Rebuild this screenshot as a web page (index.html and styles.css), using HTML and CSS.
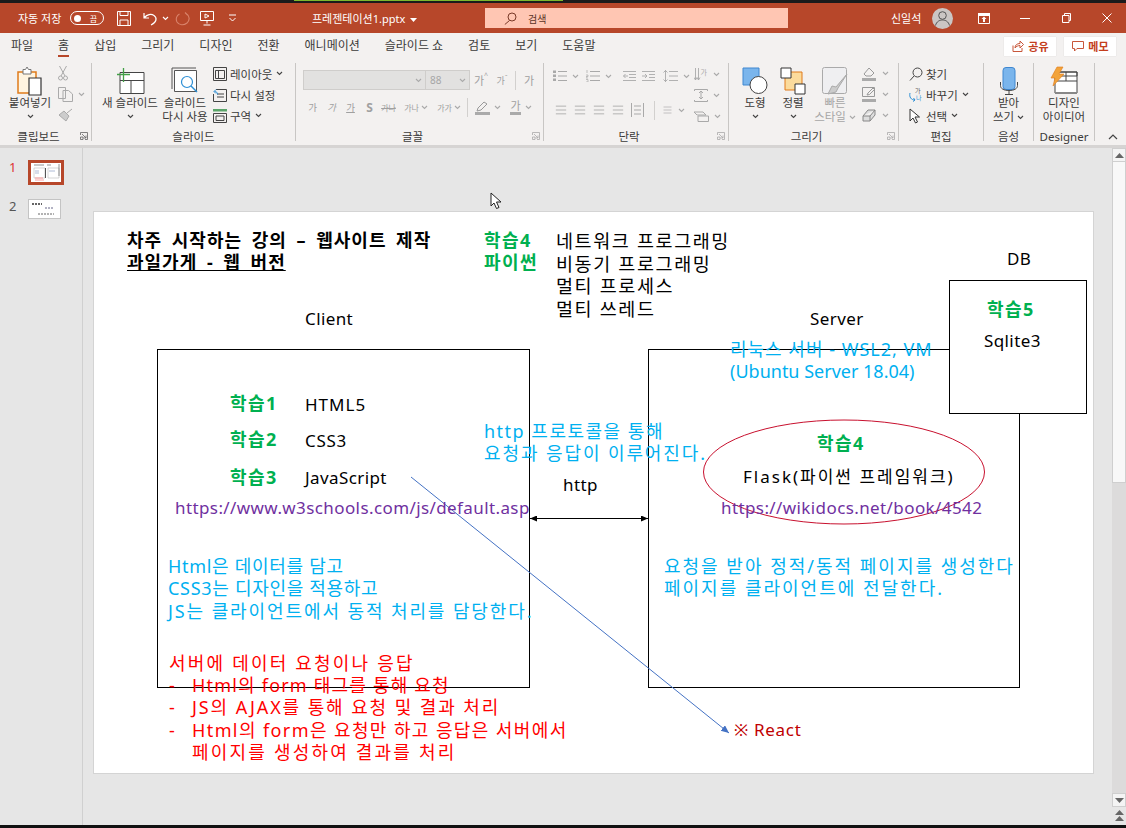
FILE: index.html
```html
<!DOCTYPE html>
<html lang="ko">

<head>
    <meta charset="UTF-8">
    <meta name="viewport" content="width=device-width, initial-scale=1.0">
    <title>프레젠테이션1.pptx</title>
    <link rel="stylesheet" href="styles.css">
</head>

<body>
    <!-- shared small glyphs -->
    <svg class="sprite">
        <defs>
            <symbol id="chev" viewBox="0 0 7 5"><path d="M1 1l2.5 2.5L6 1" fill="none" stroke="currentColor" stroke-width="1.1"/></symbol>
            <symbol id="lines" viewBox="0 0 14 12"><path d="M1 1.5h12M1 6h12M1 10.5h12" fill="none" stroke="currentColor"/></symbol>
            <symbol id="bullets" viewBox="0 0 14 12"><path d="M0 .5h3v2.500H0zM0 4.500h3v2.500H0zM0 8.500h3v2.500H0z" fill="currentColor"/><path d="M5 1.500h9M5 6h9M5 10.500h9" fill="none" stroke="currentColor"/></symbol>
            <symbol id="numbers" viewBox="0 0 14 12"><path d="M1 0v3M0 5h2v1.500H0v1.500h2M0 9.500h2v2.500H0" fill="none" stroke="currentColor" stroke-width=".7"/><path d="M4 1.500h10M4 6h10M4 10.500h10" fill="none" stroke="currentColor"/></symbol>
            <symbol id="outdent" viewBox="0 0 13 12"><path d="M0 1.500h13M6 4.500h7M6 7.500h7M0 10.500h13M5 6H.5M2.500 4L.5 6l2 2" fill="none" stroke="currentColor" stroke-width=".9"/></symbol>
            <symbol id="indent" viewBox="0 0 13 12"><path d="M0 1.500h13M7 4.500h6M7 7.500h6M0 10.500h13M0 6h5M3 4l2 2-2 2" fill="none" stroke="currentColor" stroke-width=".9"/></symbol>
            <symbol id="spacing" viewBox="0 0 15 12"><path d="M2.500 0v12M.5 2.500L2.500.5l2 2M.5 9.500l2 2 2-2M6 1.500h9M6 6h9M6 10.500h9" fill="none" stroke="currentColor" stroke-width=".9"/></symbol>
            <symbol id="launch" viewBox="0 0 8 8"><path d="M.5 3V.5h7v7H5M2 2l4 4M6 3.500V6H3.500M.5 5h2.500v2.500H.5z" fill="none" stroke="currentColor" stroke-width=".8"/></symbol>
        </defs>
    </svg>

    <div class="top-strip"><div class="top-green"></div></div>

    <!-- title bar -->
    <header class="titlebar">
        <span class="autosave">자동 저장</span>
        <span class="toggle"><i></i><b>끔</b></span>
        <svg class="qat qat-save" width="14" height="15" viewBox="0 0 14 15"><path d="M.5.500h13v14H.5zM3 .5v4h8v-4M3 14.500V9h8v5.500" fill="none" stroke="#fff"/></svg>
        <svg class="qat qat-undo" width="15" height="15" viewBox="0 0 15 15"><path d="M1 2v5h5M1.500 6.500C4 3.500 8 2.500 11 4.500c3.500 2.500 2.500 7-3 9.500" fill="none" stroke="#fff" stroke-width="1.200"/></svg>
        <svg class="qat-chev" width="7" height="5"><use href="#chev"/></svg>
        <svg class="qat qat-redo" width="15" height="15" viewBox="0 0 15 15"><path d="M10 1.500l2.500 2.500M4.500 3C1.500 4.500.5 8 2 11c2 3.500 7 3.500 10 1 2.500-2.500 2.500-6 .5-8.500" fill="none" stroke="#d9836b" stroke-width="1.100"/></svg>
        <svg class="qat qat-show" width="14" height="15" viewBox="0 0 14 15"><path d="M.5.500h13v9H.5zM7 9.500v3M3.500 14h7M5 3l4 2-4 2z" fill="none" stroke="#fff"/></svg>
        <svg class="qat-more" width="9" height="8" viewBox="0 0 9 8"><path d="M1 1h7M1.500 4l3 3 3-3" fill="none" stroke="#fff"/></svg>
        <span class="doc-title">프레젠테이션1.pptx<svg class="doc-caret" width="7" height="4"><path d="M0 0h7L3.500 4z" fill="#fff"/></svg></span>
        <div class="search">
            <svg width="13" height="13" viewBox="0 0 13 13"><path d="M5.500 8.500L.8 12.500" stroke="#7a3a28" fill="none"/><circle cx="8" cy="5" r="4" fill="none" stroke="#7a3a28"/></svg>
            <span>검색</span>
        </div>
        <span class="user">신일석</span>
        <span class="avatar"><svg width="21" height="21" viewBox="0 0 21 21"><circle cx="10.500" cy="7.500" r="3.800" fill="none" stroke="#555"/><path d="M3.500 17.500c1-4 4-5.500 7-5.500s6 1.500 7 5.500" fill="none" stroke="#555"/></svg></span>
        <svg class="win win-display" width="12" height="11" viewBox="0 0 12 11"><path d="M.5.500h11v10H.5z" fill="none" stroke="#fff"/><path d="M0 0h12v3H0zM6 3.500L3.500 6h1.500v3h2V6h1.500z" fill="#fff"/></svg>
        <svg class="win win-min" width="10" height="10" viewBox="0 0 10 10"><path d="M0 5.500h10" stroke="#fff"/></svg>
        <svg class="win win-max" width="9" height="10" viewBox="0 0 9 10"><path d="M.5 2.500h6.500v7H.5zM2.500 2.500v-2h6v7H7" fill="none" stroke="#fff"/></svg>
        <svg class="win win-close" width="10" height="10" viewBox="0 0 10 10"><path d="M.5.500l9 9M9.500.500l-9 9" stroke="#fff"/></svg>
    </header>

    <!-- tabs -->
    <nav class="tabs">
        <span class="tab">파일</span>
        <span class="tab tab-active">홈</span>
        <span class="tab">삽입</span>
        <span class="tab">그리기</span>
        <span class="tab">디자인</span>
        <span class="tab">전환</span>
        <span class="tab">애니메이션</span>
        <span class="tab">슬라이드 쇼</span>
        <span class="tab">검토</span>
        <span class="tab">보기</span>
        <span class="tab">도움말</span>
        <span class="tab-btn tab-btn-first">
            <svg width="12" height="12" viewBox="0 0 12 12"><path d="M1 5.500v6h9V8M3 8c0-3 2-4.500 5-4.500V1l3.500 3.500L8 8V5.500C6 5.500 4 6.500 3 8z" fill="none" stroke="#c8573a"/></svg>공유
        </span>
        <span class="tab-btn">
            <svg width="12" height="12" viewBox="0 0 12 12"><path d="M.5 1.500h11v7H5L2.500 11V8.500h-2z" fill="none" stroke="#c8573a"/></svg>메모
        </span>
    </nav>

    <!-- ribbon -->
    <section class="ribbon">
        <div class="group g-clip">
            <div class="group-body">
                <div class="big big-paste">
                    <svg class="big-icon" width="26" height="30" viewBox="0 0 26 30">
                        <path d="M1 6h18v21H1z" fill="#fff4e0" stroke="#e07b1a" stroke-width="1.500"/>
                        <path d="M6 6V3.500h2.500L10 1l1.500 2.500H14V6v2H6z" fill="#fff" stroke="#777"/>
                        <path d="M12 12h12v17H12z" fill="#fff" stroke="#333" stroke-width="1.200"/>
                    </svg>
                    <span>붙여넣기</span>
                    <svg class="chev" width="7" height="5"><use href="#chev"/></svg>
                </div>
                <div class="clip-tools">
                    <svg width="10" height="16" viewBox="0 0 10 16"><path d="M1.500 1L7 11M8.500 1L3 11" fill="none" stroke="#aaa"/><circle cx="2.500" cy="13" r="2" fill="none" stroke="#aaa"/><circle cx="7.500" cy="13" r="2" fill="none" stroke="#aaa"/></svg>
                    <span class="clip-copy">
                        <svg width="15" height="15" viewBox="0 0 15 15"><path d="M.5.500h7v11h-7zM5 3.500h5.500l4 3.500v7.500H5z" fill="#f3f1f0" stroke="#aaa"/></svg>
                        <svg class="chev-off" width="7" height="5"><use href="#chev"/></svg>
                    </span>
                    <svg width="15" height="14" viewBox="0 0 15 14"><path d="M9 5l5-4M6 3l5 5-3 5-7-6z" fill="#ccc" stroke="#aaa"/></svg>
                </div>
            </div>
            <div class="group-label with-launch">클립보드<svg class="launch" width="8" height="8"><use href="#launch"/></svg></div>
        </div>

        <div class="group g-slide">
            <div class="group-body">
                <div class="big big-new">
                    <svg class="big-icon" width="29" height="28" viewBox="0 0 29 28">
                        <path d="M4 5.500h24v21H4zM4 13.500h24M15 13.500v13" fill="#fff" stroke="#444"/>
                        <path d="M1 7.500h13M7.500 1v14" stroke="#43a047" stroke-width="1.300"/>
                    </svg>
                    <span>새 슬라이드</span>
                    <svg class="chev" width="7" height="5"><use href="#chev"/></svg>
                </div>
                <div class="big big-reuse">
                    <svg class="big-icon" width="29" height="28" viewBox="0 0 29 28">
                        <path d="M1 1h24M1 1v21" stroke="#555" fill="none"/>
                        <path d="M3.500 3.500h22v21h-22z" fill="#fff" stroke="#555"/>
                        <circle cx="16" cy="15" r="5.500" fill="#fff" stroke="#2d8fd5" stroke-width="1.200"/>
                        <path d="M20 19l6 6" stroke="#2d8fd5" stroke-width="1.400"/>
                    </svg>
                    <span>슬라이드<br>다시 사용</span>
                </div>
                <div class="rows rows-slide">
                    <div class="row"><svg width="14" height="14" viewBox="0 0 14 14"><path d="M.5.500h13v13H.5zM2.500 3.500h9M5.500 3.500v8M2.500 3.500v8h9v-8" fill="none" stroke="#444"/></svg>레이아웃<svg class="chev" width="7" height="5"><use href="#chev"/></svg></div>
                    <div class="row"><svg width="14" height="14" viewBox="0 0 14 14"><path d="M3 1.500h10.500v12H.5V6M4 6h7M4 9h7" fill="none" stroke="#444"/><path d="M1 3.500l2-2M1 3.500l2 2M1.500 3.500c2 0 3 1 3 3" fill="none" stroke="#2d8fd5"/></svg>다시 설정</div>
                    <div class="row"><svg width="14" height="14" viewBox="0 0 14 14"><path d="M0 0h14v2.500H0z" fill="#5aa469"/><path d="M.5 4.500h13v9H.5zM3 7h8v4.500H3z" fill="none" stroke="#444"/></svg>구역<svg class="chev" width="7" height="5"><use href="#chev"/></svg></div>
                </div>
            </div>
            <div class="group-label">슬라이드</div>
        </div>

        <div class="group g-font">
            <div class="group-body font-body">
                <div class="font-top">
                    <span class="combo combo-name"><svg class="chev-off" width="7" height="5"><use href="#chev"/></svg></span>
                    <span class="combo combo-size">88<svg class="chev-off" width="7" height="5"><use href="#chev"/></svg></span>
                    <span class="fi fi-grow">가<sup>^</sup></span>
                    <span class="fi fi-shrink">가<sup>ˇ</sup></span>
                    <i class="vsep"></i>
                    <span class="fi fi-clear">가</span>
                </div>
                <div class="font-bottom">
                    <span class="fi fi-small b">가</span>
                    <span class="fi fi-small it">가</span>
                    <span class="fi fi-small un">가</span>
                    <span class="fi fi-s">S</span>
                    <span class="fi fi-tiny st">가나</span>
                    <span class="fi fi-tiny spaced">가나<svg class="chev-off" width="7" height="5"><use href="#chev"/></svg></span>
                    <span class="fi fi-tiny case">가가<svg class="chev-off" width="7" height="5"><use href="#chev"/></svg></span>
                    <i class="vsep"></i>
                    <span class="fi fi-pen">
                        <svg width="15" height="15" viewBox="0 0 15 15"><path d="M2 11l1-3 6-6 3 2-6 6z" fill="none" stroke="#999"/><path d="M0 12h15v3H0z" fill="#aaa"/></svg>
                        <svg class="chev-off" width="7" height="5"><use href="#chev"/></svg>
                    </span>
                    <span class="fi fi-color"><span class="under">가</span><svg class="chev-off" width="7" height="5"><use href="#chev"/></svg></span>
                </div>
            </div>
            <div class="group-label with-launch">글꼴<svg class="launch launch-off" width="8" height="8"><use href="#launch"/></svg></div>
        </div>

        <div class="group g-para">
            <div class="group-body para-body">
                <div class="para-left">
                    <div class="para-row para-top">
                        <span class="pi pi-a"><svg width="14" height="12"><use href="#bullets"/></svg><svg class="chev-off" width="7" height="5"><use href="#chev"/></svg></span>
                        <span class="pi pi-b"><svg width="14" height="12"><use href="#numbers"/></svg><svg class="chev-off" width="7" height="5"><use href="#chev"/></svg></span>
                        <span class="pi pi-c"><svg width="13" height="12"><use href="#outdent"/></svg></span>
                        <span class="pi pi-d"><svg width="13" height="12"><use href="#indent"/></svg></span>
                        <span class="pi pi-e"><svg width="15" height="12"><use href="#spacing"/></svg><svg class="chev-off" width="7" height="5"><use href="#chev"/></svg></span>
                    </div>
                    <div class="para-row para-bottom">
                        <svg width="12" height="12"><use href="#lines"/></svg>
                        <svg width="12" height="12"><use href="#lines"/></svg>
                        <svg width="12" height="12"><use href="#lines"/></svg>
                        <svg width="12" height="12"><use href="#lines"/></svg>
                        <svg width="13" height="14" viewBox="0 0 13 14"><path d="M.5 0v14M12.500 0v14M3 3h7M3 7h7M3 11h7" fill="none" stroke="currentColor"/></svg>
                        <i class="vsep"></i>
                        <span class="pi pi-f"><svg width="11" height="8"><use href="#lines"/></svg><svg class="chev-off" width="7" height="5"><use href="#chev"/></svg></span>
                    </div>
                </div>
                <div class="para-right">
                    <span class="pr"><svg width="14" height="15" viewBox="0 0 14 15"><path d="M1.500 1v12M4.500 1v12M0 10.500l1.500 2.500 1.500-2.500M3 10.500L4.500 13 6 10.500" fill="none" stroke="currentColor" stroke-width=".9"/><text x="6.500" y="8" font-size="7" fill="currentColor">가</text></svg><svg class="chev-off" width="7" height="5"><use href="#chev"/></svg></span>
                    <span class="pr"><svg width="14" height="13" viewBox="0 0 14 13"><path d="M.5 2V.5h13V2M.5 11v1.500h13V11M7 2v8M5 4l2-2 2 2M5 8l2 2 2-2" fill="none" stroke="currentColor"/></svg><svg class="chev-off" width="7" height="5"><use href="#chev"/></svg></span>
                    <span class="pr"><svg width="15" height="11" viewBox="0 0 15 11"><path d="M0 1h9l3 3H3zM4 5h10.500v5.500H4z" fill="none" stroke="currentColor"/></svg><svg class="chev-off" width="7" height="5"><use href="#chev"/></svg></span>
                </div>
            </div>
            <div class="group-label with-launch">단락<svg class="launch launch-off" width="8" height="8"><use href="#launch"/></svg></div>
        </div>

        <div class="group g-draw">
            <div class="group-body">
                <div class="big big-shape">
                    <svg class="big-icon" width="26" height="28" viewBox="0 0 26 28">
                        <path d="M1 1h16v17H1z" fill="#7ab5ec" stroke="#3f87d0"/>
                        <circle cx="16.500" cy="18" r="8.500" fill="#fff" stroke="#444"/>
                    </svg>
                    <span>도형</span>
                    <svg class="chev" width="7" height="5"><use href="#chev"/></svg>
                </div>
                <div class="big big-arrange">
                    <svg class="big-icon" width="26" height="28" viewBox="0 0 26 28">
                        <path d="M5 5h17v18H5z" fill="#fbdb9c" stroke="#e07b1a"/>
                        <path d="M1 1h10v10H1zM15 17h10v10H15z" fill="#fff" stroke="#333"/>
                    </svg>
                    <span>정렬</span>
                    <svg class="chev" width="7" height="5"><use href="#chev"/></svg>
                </div>
                <div class="big big-quick">
                    <svg class="big-icon" width="26" height="28" viewBox="0 0 26 28">
                        <rect x=".5" y=".5" width="24" height="26" rx="2" fill="#efeff1" stroke="#aaa"/>
                        <path d="M25 7L14 20l-4-1-4 8 8-2 2-4z" fill="#ccc" stroke="#aaa"/>
                    </svg>
                    <span>빠른<br>스타일<svg class="chev-off chev-inline" width="7" height="5"><use href="#chev"/></svg></span>
                </div>
                <div class="rows rows-draw">
                    <div class="row"><svg width="14" height="15" viewBox="0 0 14 15"><path d="M2 8l5-6 5 5-3 3H4z" fill="none" stroke="#999"/><path d="M0 12h14v3H0z" fill="#aaa"/></svg><svg class="chev-off" width="7" height="5"><use href="#chev"/></svg></div>
                    <div class="row"><svg width="14" height="15" viewBox="0 0 14 15"><path d="M.5.500h12v9H.5zM5 8l1-2 5-5 1.500 1.500-5 5z" fill="none" stroke="#999"/><path d="M0 12h14v3H0z" fill="#aaa"/></svg><svg class="chev-off" width="7" height="5"><use href="#chev"/></svg></div>
                    <div class="row"><svg width="14" height="13" viewBox="0 0 14 13"><path d="M1 7l5-6h7v5l-5 6H1zM1 7h7l5-6M8 7v5" fill="#ddd" stroke="#888"/></svg><svg class="chev-off" width="7" height="5"><use href="#chev"/></svg></div>
                </div>
            </div>
            <div class="group-label with-launch">그리기<svg class="launch launch-off" width="8" height="8"><use href="#launch"/></svg></div>
        </div>

        <div class="group g-edit">
            <div class="group-body">
                <div class="rows rows-edit">
                    <div class="row"><svg width="14" height="14" viewBox="0 0 14 14"><circle cx="8.500" cy="5.500" r="4.500" fill="none" stroke="#444"/><path d="M5 9l-4 4.500" stroke="#444"/></svg>찾기</div>
                    <div class="row"><svg width="14" height="15" viewBox="0 0 14 15"><path d="M1 6c-1 4 1 7 5 7M4.500 11L6 13l-2 1.500" fill="none" stroke="#2d8fd5"/><text x="6" y="6" font-size="6" fill="#555">가</text><text x="7" y="13" font-size="6" fill="#2d8fd5">나</text></svg>바꾸기<svg class="chev chev-far" width="7" height="5"><use href="#chev"/></svg></div>
                    <div class="row"><svg width="14" height="16" viewBox="0 0 14 16"><path d="M1 1v12l3-3 2.500 5 2-1-2.500-5h4.500z" fill="#fff" stroke="#333"/></svg>선택<svg class="chev" width="7" height="5"><use href="#chev"/></svg></div>
                </div>
            </div>
            <div class="group-label">편집</div>
        </div>

        <div class="group g-voice">
            <div class="group-body">
                <div class="big big-voice">
                    <svg class="big-icon" width="18" height="28" viewBox="0 0 18 28">
                        <rect x="3" y=".5" width="12" height="22" rx="3" fill="#7ab5ec" stroke="#3f87d0"/>
                        <path d="M.5 15v3.500c0 3 3 5 8.500 5s8.500-2 8.500-5V15M9 23.500V27M5 27.500h8" fill="none" stroke="#444"/>
                    </svg>
                    <span>받아<br>쓰기<svg class="chev chev-inline" width="7" height="5"><use href="#chev"/></svg></span>
                </div>
            </div>
            <div class="group-label">음성</div>
        </div>

        <div class="group g-design">
            <div class="group-body">
                <div class="big big-design">
                    <svg class="big-icon" width="28" height="28" viewBox="0 0 28 28">
                        <path d="M5 5h22v21H5z" fill="#fff" stroke="#444"/>
                        <path d="M5 5h22v4H5zM5 14h22M16 5v9" fill="none" stroke="#444"/>
                        <path d="M5 26h22" stroke="#888" stroke-width="2"/>
                        <path d="M7 0h6l-4 7h5L3 19l2-8H1z" fill="#f2a33a" stroke="#e07b1a" stroke-width=".6"/>
                    </svg>
                    <span>디자인<br>아이디어</span>
                </div>
            </div>
            <div class="group-label">Designer</div>
        </div>

        <svg class="collapse" width="10" height="6" viewBox="0 0 10 6"><path d="M1 5l4-4 4 4" fill="none" stroke="#444" stroke-width="1.200"/></svg>
    </section>
    <div class="ribbon-shadow"></div>

    <main class="workspace">
        <aside class="thumbs">
            <div class="thumb-row">
                <span class="thumb-no thumb-no-on">1</span>
                <div class="thumb thumb-on">
                    <svg width="30" height="19" viewBox="0 0 30 19">
                        <path d="M3 5h11v10H3zM17 5h11v10H17z" fill="none" stroke="#bbb" stroke-width=".6"/>
                        <path d="M3 2h10M16 2h4M28 1v12" stroke="#777" stroke-width=".8"/>
                        <path d="M4 8h4M4 10h4M18 8h6" stroke="#9ac" stroke-width=".8"/>
                        <path d="M4 15h8M4 17h9" stroke="#f88" stroke-width=".8"/>
                        <path d="M14.500 5v10" stroke="#555" stroke-width="1"/>
                    </svg>
                </div>
            </div>
            <div class="thumb-row thumb-row-2">
                <span class="thumb-no">2</span>
                <div class="thumb">
                    <svg width="31" height="18" viewBox="0 0 31 18">
                        <path d="M3 4h10" stroke="#333" stroke-width="1.400" stroke-dasharray="2 1"/>
                        <path d="M16 8h9" stroke="#668" stroke-width="1" stroke-dasharray="2 1"/>
                        <path d="M9 14h16" stroke="#666" stroke-width="1" stroke-dasharray="2 1"/>
                    </svg>
                </div>
            </div>
        </aside>

        <div class="canvas">
            <svg class="cursor" width="13" height="18" viewBox="0 0 13 18"><path d="M1 1v13l3-3 2.500 5.500 2.500-1L6.500 10H11z" fill="#fff" stroke="#222"/></svg>

            <!-- the slide is a free canvas, its shapes sit where the author dropped them -->
            <div class="slide">
                <div class="box box-client"></div>
                <div class="box box-server"></div>
                <div class="box box-db"></div>

                <svg class="overlay" width="999" height="561" viewBox="0 0 999 561">
                    <defs>
                        <marker id="tip" markerWidth="8" markerHeight="8" refX="7" refY="3" orient="auto"><path d="M0 0l7 3-7 3z" fill="#000"/></marker>
                        <marker id="tipback" markerWidth="8" markerHeight="8" refX="0" refY="3" orient="auto"><path d="M7 0L0 3l7 3z" fill="#000"/></marker>
                        <marker id="tipblue" markerWidth="9" markerHeight="8" refX="8" refY="3.500" orient="auto"><path d="M0 0l8 3.500-8 3.500z" fill="#4472c4"/></marker>
                    </defs>
                    <ellipse cx="750" cy="260" rx="140.500" ry="52" fill="none" stroke="#c8102e"/>
                    <path d="M436 306.500h118" stroke="#000" marker-start="url(#tipback)" marker-end="url(#tip)"/>
                    <path d="M317 265L635 521" stroke="#4472c4" marker-end="url(#tipblue)"/>
                </svg>

                <div class="txt heading t-title">차주 시작하는 강의 – 웹사이트 제작<br><u>과일가게 - 웹 버전</u></div>
                <div class="txt green t-python">학습4<br>파이썬</div>
                <div class="txt black-lg t-topics"><span class="ln">네트워크 프로그래밍</span><span class="ln">비동기 프로그래밍</span><span class="ln">멀티 프로세스</span><span class="ln">멀티 쓰레드</span></div>

                <div class="txt label t-client">Client</div>
                <div class="txt label t-server">Server</div>
                <div class="txt label t-db">DB</div>

                <div class="txt green t-l1">학습1</div>
                <div class="txt label t-html">HTML5</div>
                <div class="txt green t-l2">학습2</div>
                <div class="txt label t-css">CSS3</div>
                <div class="txt green t-l3">학습3</div>
                <div class="txt label t-js">JavaScript</div>
                <div class="txt purple t-w3">https://www.w3schools.com/js/default.asp</div>

                <div class="txt blue t-proto"><span class="ln ls15">http 프로토콜을 통해</span><span class="ln ls19">요청과 응답이 이루어진다.</span></div>
                <div class="txt label t-http">http</div>

                <div class="txt blue t-linux"><span class="ln ls1">리눅스 서버 - WSL2, VM</span><span class="ln ls0">(Ubuntu Server 18.04)</span></div>
                <div class="txt green t-l5">학습5</div>
                <div class="txt label t-sqlite">Sqlite3</div>

                <div class="txt green t-l4">학습4</div>
                <div class="txt label t-flask">Flask(파이썬 프레임워크)</div>
                <div class="txt purple t-wiki">https://wikidocs.net/book/4542</div>

                <div class="txt blue t-client-note"><span class="ln ls07">Html은 데이터를 담고</span><span class="ln ls07">CSS3는 디자인을 적용하고</span><span class="ln ls19">JS는 클라이언트에서 동적 처리를 담당한다.</span></div>
                <div class="txt blue t-server-note"><span class="ln ls2">요청을 받아 정적/동적 페이지를 생성한다</span><span class="ln ls2">페이지를 클라이언트에 전달한다.</span></div>

                <div class="txt red t-req ls22">서버에 데이터 요청이나 응답</div>
                <ul class="txt red t-list">
                    <li><span class="ln ls12">Html의 form 태그를 통해 요청</span></li>
                    <li><span class="ln ls19">JS의 AJAX를 통해 요청 및 결과 처리</span></li>
                    <li><span class="ln ls14">Html의 form은 요청만 하고 응답은 서버에서</span><span class="ln ls22">페이지를 생성하여 결과를 처리</span></li>
                </ul>
                <div class="txt t-react">※ React</div>
            </div>
        </div>

        <div class="scrollbar">
            <span class="sb-btn"><svg width="9" height="5"><path d="M4.500 0L9 5H0z" fill="#666"/></svg></span>
            <span class="sb-thumb"></span>
            <span class="sb-track"></span>
            <span class="sb-btn"><svg width="9" height="5"><path d="M4.500 5L9 0H0z" fill="#666"/></svg></span>
            <span class="sb-page">
                <svg width="9" height="12" viewBox="0 0 9 12"><path d="M4.500 0L9 5H0zM4.500 6L9 11H0z" fill="#666"/></svg>
            </span>
        </div>
    </main>

    <div class="bottom-strip"></div>
</body>

</html>
```

FILE: styles.css
```css
* {
    box-sizing: border-box;
}

body {
    font-family: "Noto Sans", "Noto Sans CJK KR", sans-serif;
    margin: 0;
    padding: 0;
    width: 1126px;
    height: 828px;
    overflow: hidden;
    display: flex;
    flex-direction: column;
    background-color: #e6e6e6;
    color: #3b3a39;
}

.sprite {
    display: none;
}

.top-strip {
    height: 3px;
    background-color: #1b1b1b;
}

.top-green {
    width: 269px;
    height: 1px;
    margin-left: 294px;
    background-color: #7fb82e;
}

.bottom-strip {
    height: 3px;
    background-color: #111;
}

/* title bar */
.titlebar {
    height: 30px;
    display: flex;
    align-items: center;
    background-color: #b7472a;
    color: #fff;
    font-size: 11px;
}

.autosave {
    margin-left: 18px;
    width: 47px;
    white-space: nowrap;
}

.toggle {
    width: 34px;
    height: 14px;
    margin-left: 5px;
    border: 1px solid #fff;
    border-radius: 7px;
    display: flex;
    align-items: center;
    justify-content: space-between;
    padding: 0 6px 0 3px;
}

.toggle i {
    width: 7px;
    height: 7px;
    border-radius: 50%;
    background-color: #fff;
}

.toggle b {
    font-weight: 400;
    font-size: 8px;
}

.qat-save { margin-left: 13px; }
.qat-undo { margin-left: 12px; }
.qat-chev { margin-left: 4px; color: #fff; }
.qat-redo { margin-left: 6px; }
.qat-show { margin-left: 10px; }
.qat-more { margin-left: 14px; }

.doc-title {
    margin-left: 75px;
    width: 173px;
    white-space: nowrap;
    font-size: 11px;
}

.doc-caret {
    margin-left: 5px;
    vertical-align: 1px;
}

.search {
    width: 303px;
    height: 20px;
    display: flex;
    align-items: center;
    padding-left: 19px;
    gap: 11px;
    background-color: #ffc6b3;
    color: #5a3326;
    font-size: 10px;
}

.user {
    margin-left: 103px;
    width: 41px;
}

.avatar {
    width: 21px;
    height: 21px;
    border-radius: 50%;
    background-color: #cbc6c4;
    display: flex;
}

.win-display { margin-left: 25px; }
.win-min { margin-left: 30px; }
.win-max { margin-left: 32px; }
.win-close { margin-left: 31px; }

/* tabs */
.tabs {
    height: 26px;
    display: flex;
    align-items: center;
    gap: 25px;
    padding-left: 11px;
    background-color: #f3f1f0;
    font-size: 12px;
    position: relative;
}

.tab {
    white-space: nowrap;
    line-height: 26px;
    height: 26px;
    position: relative;
}

.tab-active::after {
    content: "";
    position: absolute;
    left: 0;
    right: 0;
    bottom: 2px;
    height: 2px;
    background-color: #b7472a;
}

.tab-btn {
    width: 52px;
    height: 19px;
    margin-left: -17px;
    display: flex;
    align-items: center;
    justify-content: center;
    gap: 4px;
    background-color: #fff;
    color: #c43e1c;
    font-weight: 700;
    font-size: 11px;
    box-shadow: 0 0 1px #ccc;
}

.tab-btn-first {
    margin-left: 384px;
}

/* ribbon */
.ribbon {
    height: 86px;
    display: flex;
    position: relative;
    background-color: #f3f1f0;
    font-size: 11.500px;
}

.ribbon-shadow {
    height: 3px;
    background-color: #d6d4d3;
}

.group {
    height: 78px;
    margin-top: 4px;
    border-right: 1px solid #c8c6c4;
    display: flex;
    flex-direction: column;
    position: relative;
}

.g-clip { width: 92px; }
.g-slide { width: 204px; }
.g-font { width: 248px; }
.g-para { width: 185px; }
.g-draw { width: 170px; }
.g-edit { width: 85px; }
.g-voice { width: 50px; }
.g-design { width: 61px; }

.group-body {
    height: 69px;
    flex: none;
    display: flex;
}

.group-label {
    text-align: center;
    line-height: 9px;
    font-size: 11.500px;
    white-space: nowrap;
}

.with-launch {
    padding-right: 14px;
}

.launch {
    position: absolute;
    right: 3px;
    bottom: 1px;
    color: #666;
}

.launch-off {
    color: #aaa;
}

.big {
    display: flex;
    flex-direction: column;
    align-items: center;
    padding-top: 3px;
    line-height: 14px;
    text-align: center;
    white-space: nowrap;
}

.big-icon {
    height: 30px;
}

.chev {
    color: #444;
}

.chev-off {
    color: #aaa;
}

.big > .chev {
    margin-top: 4px;
}

.chev-inline {
    margin-left: 3px;
    vertical-align: 1px;
}

.big-paste {
    width: 52px;
    margin-left: 4px;
}

.clip-tools {
    margin-left: 2px;
    padding-top: 2px;
    display: flex;
    flex-direction: column;
    gap: 6px;
}

.clip-copy {
    display: flex;
    align-items: center;
    gap: 5px;
}

.big-new {
    width: 66px;
    margin-left: 5px;
}

.big-reuse {
    width: 44px;
}

.rows {
    display: flex;
    flex-direction: column;
}

.row {
    height: 21px;
    display: flex;
    align-items: center;
    gap: 3px;
    white-space: nowrap;
}

.row > .chev,
.row > .chev-off {
    margin-left: 1px;
}

.rows-slide {
    margin-left: 6px;
}

/* font group */
.font-body {
    flex-direction: column;
    padding-left: 7px;
    color: #a6a6a6;
}

.font-top {
    height: 20px;
    margin-top: 7px;
    display: flex;
    align-items: center;
}

.combo {
    height: 20px;
    display: flex;
    align-items: center;
    justify-content: flex-end;
    gap: 5px;
    padding: 0 3px;
    background-color: #e2e1e0;
    border: 1px solid #cfcdcb;
    font-size: 10px;
}

.combo-name { width: 123px; }
.combo-size { width: 44px; justify-content: space-between; border-left: 0; padding-left: 4px; }

.fi {
    display: flex;
    align-items: center;
    justify-content: center;
    white-space: nowrap;
    color: #a0a0a0;
}

.fi sup {
    font-size: 7px;
    line-height: 1;
    align-self: flex-start;
}

.fi-grow { width: 18px; margin-left: 2px; font-size: 11px; }
.fi-shrink { width: 20px; font-size: 9px; margin-left: 2px; }
.fi-clear { width: 16px; margin-left: 5px; font-size: 11px; }

.vsep {
    width: 1px;
    height: 19px;
    margin-left: 3px;
    background-color: #d2d0ce;
}

.font-bottom {
    height: 20px;
    margin-top: 7px;
    display: flex;
    align-items: center;
}

.fi-small { width: 19px; font-size: 9.500px; }
.it { font-style: italic; }
.un { text-decoration: underline; }
.fi-s { width: 19px; font-size: 12px; font-weight: 700; }
.fi-tiny { font-size: 8px; gap: 2px; }
.st { width: 19px; text-decoration: line-through; }
.spaced { width: 32px; margin-left: 2px; }
.case { width: 30px; margin-left: 2px; }
.fi-pen { margin-left: 5px; width: 30px; gap: 4px; }
.fi-color { margin-left: 3px; width: 30px; gap: 4px; font-size: 11px; }
.under { border-bottom: 3px solid #aaa; line-height: 12px; }

/* paragraph group */
.para-body {
    color: #a9a9a9;
}

.para-left {
    width: 150px;
    padding-left: 9px;
}

.para-row {
    display: flex;
    align-items: center;
}

.para-top {
    height: 20px;
    margin-top: 3px;
}

.para-bottom {
    height: 20px;
    margin-top: 14px;
    gap: 7px;
    padding-left: 2px;
}

.pi {
    display: flex;
    align-items: center;
    gap: 5px;
}

.pi-b { margin-left: 7px; }
.pi-c { margin-left: 11px; }
.pi-d { margin-left: 6px; }
.pi-e { margin-left: 8px; }

.para-right {
    padding-top: 1px;
    display: flex;
    flex-direction: column;
}

.pr {
    height: 21px;
    display: flex;
    align-items: center;
    gap: 5px;
    font-size: 9px;
}

/* drawing group */
.big-shape {
    width: 34px;
    margin-left: 9px;
}

.big-arrange {
    width: 34px;
    margin-left: 4px;
}

.big-quick {
    width: 50px;
    margin-left: 0;
    color: #a6a6a6;
}

.rows-draw {
    margin-left: 2px;
}

.rows-draw .row {
    gap: 5px;
}

.rows-edit {
    margin-left: 10px;
}

.chev-far {
    margin-left: 10px;
}

.big-voice {
    width: 49px;
}

.big-design {
    width: 60px;
}

.collapse {
    position: absolute;
    left: 1108px;
    bottom: 5px;
}

/* workspace */
.workspace {
    flex: 1;
    min-height: 0;
    display: flex;
}

.thumbs {
    width: 83px;
    border-right: 1px solid #d0d0d0;
    padding-top: 12px;
}

.thumb-row {
    display: flex;
    padding-left: 9px;
}

.thumb-row-2 {
    margin-top: 14px;
}

.thumb-no {
    width: 19px;
    font-size: 13px;
    line-height: 14px;
    color: #555;
}

.thumb-no-on {
    color: #d33;
}

.thumb {
    width: 33px;
    height: 20px;
    background-color: #fff;
    border: 1px solid #c4c4c4;
    display: flex;
}

.thumb-on {
    width: 36px;
    height: 25px;
    border: 3px solid #b7472a;
}

.canvas {
    flex: 1;
    position: relative;
}

.cursor {
    position: absolute;
    left: 407px;
    top: 44px;
}

.slide {
    width: 999px;
    height: 561px;
    margin: 64px 0 0 11px;
    position: relative;
    background-color: #fff;
    box-shadow: 0 0 0 1px #d4d4d4;
}

.box {
    position: absolute;
    border: 1px solid #000;
    background-color: #fff;
}

.box-client { left: 63px; top: 137px; width: 373px; height: 339px; }
.box-server { left: 554px; top: 137px; width: 372px; height: 339px; }
.box-db { left: 855px; top: 68px; width: 138px; height: 134px; }

.overlay {
    position: absolute;
    left: 0;
    top: 0;
}

.txt {
    position: absolute;
    margin: 0;
    white-space: nowrap;
    font-size: 18px;
    line-height: 22.400px;
    color: #000;
}

.ln { display: block; }
.ls0 { letter-spacing: 0; }
.ls07 { letter-spacing: .7px; }
.ls1 { letter-spacing: 1px; }
.ls12 { letter-spacing: 1.200px; }
.ls14 { letter-spacing: 1.400px; }
.ls15 { letter-spacing: 1.500px; }
.ls19 { letter-spacing: 1.900px; }
.ls2 { letter-spacing: 2px; }
.ls22 { letter-spacing: 2.200px; }

.heading { font-weight: 700; letter-spacing: 1px; word-spacing: 4px; }
.black-lg { font-size: 18.500px; letter-spacing: 1.600px; line-height: 22.500px; }
.label { font-size: 17px; letter-spacing: .4px; }
.green { color: #00b050; font-weight: 700; letter-spacing: 1.400px; }
.purple { color: #7030a0; font-size: 17px; letter-spacing: .4px; }
.blue { color: #00b0f0; }
.red { color: #f00; }

.t-title { left: 33px; top: 17px; }
.t-python { left: 390px; top: 17px; }
.t-topics { left: 462px; top: 18px; }
.t-client { left: 211px; top: 96px; }
.t-server { left: 716px; top: 96px; }
.t-db { left: 913px; top: 36px; }
.t-l1 { left: 136px; top: 180px; }
.t-html { left: 211px; top: 182px; letter-spacing: 1px; }
.t-l2 { left: 136px; top: 216px; }
.t-css { left: 211px; top: 218px; letter-spacing: .7px; }
.t-l3 { left: 136px; top: 254px; }
.t-js { left: 211px; top: 255px; }
.t-w3 { left: 81px; top: 285px; }
.t-proto { left: 390px; top: 208px; }
.t-http { left: 469px; top: 262px; }
.t-linux { left: 636px; top: 126px; }
.t-l5 { left: 893px; top: 86px; }
.t-sqlite { left: 890px; top: 118px; }
.t-l4 { left: 723px; top: 220px; }
.t-flask { left: 649px; top: 254px; letter-spacing: 2px; }
.t-wiki { left: 627px; top: 285px; }
.t-client-note { left: 74px; top: 343px; }
.t-server-note { left: 570px; top: 343px; }
.t-req { left: 75px; top: 440px; }

.t-list {
    left: 75px;
    top: 462px;
    padding: 0;
    list-style: none;
}

.t-list li {
    padding-left: 23px;
    position: relative;
}

.t-list li::before {
    content: "-";
    position: absolute;
    left: 0;
}

.t-react {
    left: 640px;
    top: 507px;
    font-size: 17px;
    letter-spacing: .7px;
    color: #c00000;
}

/* scrollbar */
.scrollbar {
    width: 14px;
    display: flex;
    flex-direction: column;
    background-color: #dcdbdb;
}

.sb-btn {
    height: 14px;
    flex: none;
    display: flex;
    align-items: center;
    justify-content: center;
    background-color: #f4f4f4;
    border: 1px solid #cfcfcf;
}

.sb-thumb {
    height: 321px;
    flex: none;
    background-color: #f8f8f8;
    border: 1px solid #cfcfcf;
    border-top: 0;
}

.sb-track {
    flex: 1;
}

.sb-page {
    height: 18px;
    flex: none;
    display: flex;
    justify-content: center;
    padding-top: 3px;
    background-color: #e6e6e6;
}
```
